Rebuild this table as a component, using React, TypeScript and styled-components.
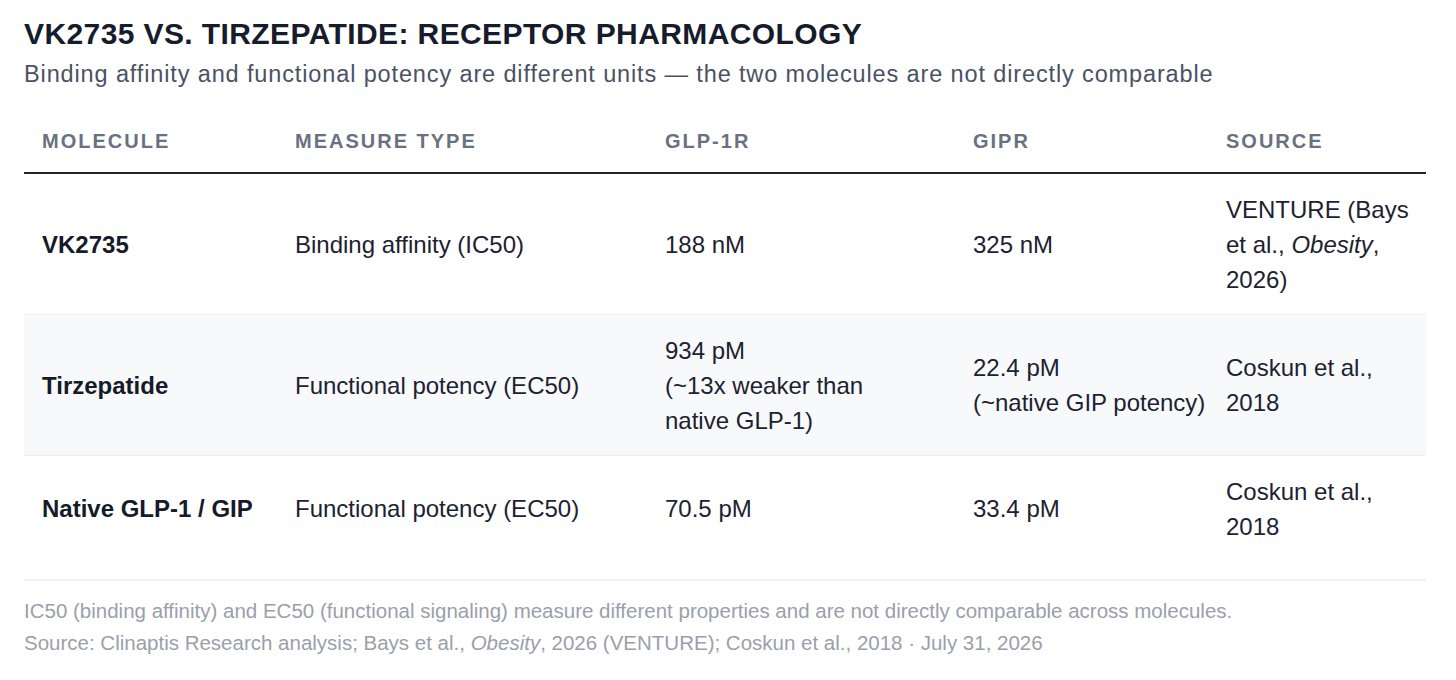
import React from "react";
import styled, { createGlobalStyle } from "styled-components";

const GlobalStyle = createGlobalStyle`
  html, body {
    margin: 0;
    padding: 0;
    background: #ffffff;
  }
  body {
    font-family: "Liberation Sans", Arial, Helvetica, sans-serif;
    -webkit-font-smoothing: antialiased;
  }
`;

const Page = styled.div`
  padding: 16px 30px 0 24px;
  font-family: "Liberation Sans", Arial, Helvetica, sans-serif;
`;

const Title = styled.h1`
  margin: 0;
  font-size: 30px;
  line-height: 36px;
  font-weight: 700;
  letter-spacing: 0.4px;
  color: #161c2b;
`;

const Subtitle = styled.p`
  margin: 7px 0 0;
  font-size: 23.5px;
  line-height: 30px;
  letter-spacing: 0.87px;
  color: #4a5263;
  white-space: nowrap;
`;

const Table = styled.table`
  width: 100%;
  margin-top: 21px;
  border-collapse: collapse;
  table-layout: fixed;
`;

const HeadCell = styled.th`
  text-align: left;
  padding: 18px;
  font-size: 20px;
  line-height: 26px;
  font-weight: 700;
  letter-spacing: 2px;
  color: #697181;
  border-bottom: 2px solid #1e2636;
  white-space: nowrap;
`;

const Row = styled.tr<{ $shaded?: boolean; $last?: boolean }>`
  background: ${(p) => (p.$shaded ? "#f8f9fb" : "#ffffff")};
  border-bottom: ${(p) => (p.$last ? "none" : "1px solid #eceef2")};
`;

const Cell = styled.td<{ $strong?: boolean }>`
  padding: 17.5px 0 17.5px 18px;
  vertical-align: middle;
  font-size: 24px;
  line-height: 35px;
  font-weight: ${(p) => (p.$strong ? 700 : 400)};
  color: ${(p) => (p.$strong ? "#151b29" : "#1d2230")};
`;

const Line = styled.span`
  display: block;
  white-space: nowrap;
`;

const Footer = styled.div`
  margin-top: 18px;
  border-top: 2px solid #f1f2f4;
  padding-top: 14px;
  font-size: 20.5px;
  line-height: 32px;
  color: #9aa0ab;
`;

const FootLine = styled.div`
  white-space: nowrap;
`;

const cols = [253, 370, 308, 253, 218];

type Lines = React.ReactNode[];

type RowData = {
  molecule: Lines;
  measure: Lines;
  glp: Lines;
  gipr: Lines;
  source: Lines;
};

const rows: RowData[] = [
  {
    molecule: ["VK2735"],
    measure: ["Binding affinity (IC50)"],
    glp: ["188 nM"],
    gipr: ["325 nM"],
    source: [
      "VENTURE (Bays",
      <>
        et al., <em>Obesity</em>,
      </>,
      "2026)",
    ],
  },
  {
    molecule: ["Tirzepatide"],
    measure: ["Functional potency (EC50)"],
    glp: ["934 pM", "(~13x weaker than", "native GLP-1)"],
    gipr: ["22.4 pM", "(~native GIP potency)"],
    source: ["Coskun et al.,", "2018"],
  },
  {
    molecule: ["Native GLP-1 / GIP"],
    measure: ["Functional potency (EC50)"],
    glp: ["70.5 pM"],
    gipr: ["33.4 pM"],
    source: ["Coskun et al.,", "2018"],
  },
];

const renderLines = (lines: Lines) =>
  lines.map((l, i) => <Line key={i}>{l}</Line>);

export default function App() {
  return (
    <>
      <GlobalStyle />
      <Page>
        <Title>VK2735 VS. TIRZEPATIDE: RECEPTOR PHARMACOLOGY</Title>
        <Subtitle>
          Binding affinity and functional potency are different units — the two molecules are not
          directly comparable
        </Subtitle>
        <Table>
          <colgroup>
            {cols.map((w, i) => (
              <col key={i} style={{ width: w }} />
            ))}
          </colgroup>
          <thead>
            <tr>
              <HeadCell>MOLECULE</HeadCell>
              <HeadCell>MEASURE TYPE</HeadCell>
              <HeadCell>GLP-1R</HeadCell>
              <HeadCell>GIPR</HeadCell>
              <HeadCell>SOURCE</HeadCell>
            </tr>
          </thead>
          <tbody>
            {rows.map((r, i) => (
              <Row key={i} $shaded={i === 1} $last={i === rows.length - 1}>
                <Cell $strong>{renderLines(r.molecule)}</Cell>
                <Cell>{renderLines(r.measure)}</Cell>
                <Cell>{renderLines(r.glp)}</Cell>
                <Cell>{renderLines(r.gipr)}</Cell>
                <Cell>{renderLines(r.source)}</Cell>
              </Row>
            ))}
          </tbody>
        </Table>
        <Footer>
          <FootLine>
            IC50 (binding affinity) and EC50 (functional signaling) measure different properties and
            are not directly comparable across molecules.
          </FootLine>
          <FootLine>
            Source: Clinaptis Research analysis; Bays et al., <em>Obesity</em>, 2026 (VENTURE); Coskun
            et al., 2018 · July 31, 2026
          </FootLine>
        </Footer>
      </Page>
    </>
  );
}
